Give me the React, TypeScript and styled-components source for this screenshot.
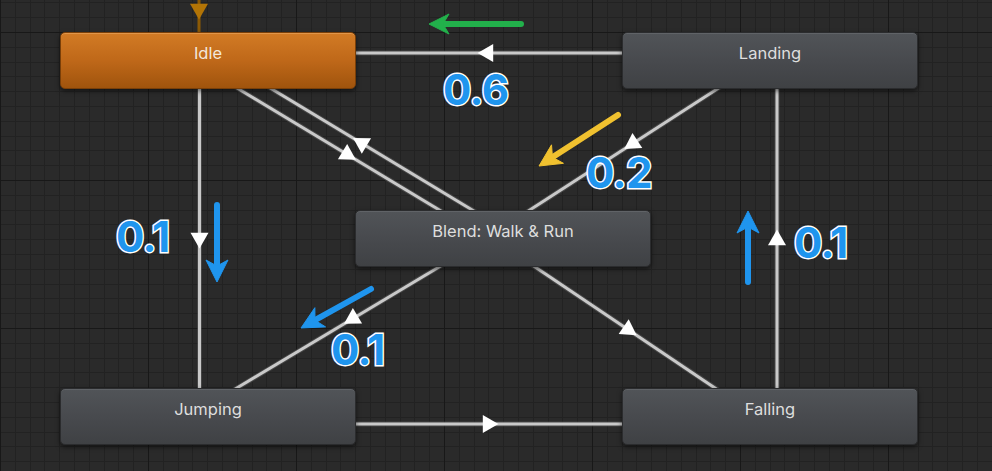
import React from 'react';
import styled, { createGlobalStyle } from 'styled-components';

const Global = createGlobalStyle`
  html, body { margin: 0; padding: 0; background: #2a2a2a; }
  body { width: 992px; height: 471px; overflow: hidden; }
`;

const Canvas = styled.div`
  position: relative;
  width: 992px;
  height: 471px;
  overflow: hidden;
  background-color: #2a2a2a;
  background-image:
    repeating-linear-gradient(to right, #181818 0 1px, transparent 1px 148px),
    repeating-linear-gradient(to bottom, #181818 0 1px, transparent 1px 148px),
    repeating-linear-gradient(to right, #222222 0 1px, transparent 1px 14.8px),
    repeating-linear-gradient(to bottom, #222222 0 1px, transparent 1px 14.8px);
  background-size: 100% 100%, 100% 1480px, 100% 100%, 100% 1480px;
  background-position: 0 0, 0 -116px, 0 0, 0 -116px;
  background-repeat: no-repeat;
  font-family: Inter, "Noto Sans", sans-serif;
`;

const Wires = styled.svg`
  position: absolute;
  left: 0;
  top: 0;
  width: 992px;
  height: 471px;
  overflow: visible;
`;

const StateNode = styled.div<{ $x: number; $y: number; $entry?: boolean }>`
  position: absolute;
  left: ${(p) => p.$x}px;
  top: ${(p) => p.$y}px;
  width: 296px;
  height: 57px;
  box-sizing: border-box;
  padding-top: 10px;
  border-radius: 5px;
  border: 1px solid ${(p) => (p.$entry ? '#7a3f08' : '#2b2c2e')};
  background: ${(p) =>
    p.$entry
      ? 'linear-gradient(to bottom, #d27b25 0%, #bf6819 50%, #a0540d 100%)'
      : 'linear-gradient(to bottom, #515458 0%, #47494d 55%, #3f4144 100%)'};
  box-shadow: inset 0 1px 0 ${(p) => (p.$entry ? 'rgba(255,200,140,0.35)' : 'rgba(255,255,255,0.09)')},
    0 2px 5px rgba(0, 0, 0, 0.55);
  color: ${(p) => (p.$entry ? '#f3e7da' : '#dedede')};
  font-size: 16.5px;
  line-height: 20px;
  text-align: center;
`;

const Weight = styled.span<{ $x: number; $y: number }>`
  position: absolute;
  left: ${(p) => p.$x}px;
  top: ${(p) => p.$y}px;
  font-family: Inter, "Noto Sans", sans-serif;
  font-weight: 700;
  font-size: 42px;
  line-height: 1;
  letter-spacing: -0.6px;
  color: #1f95ee;
  -webkit-text-stroke: 3px #ffffff;
  paint-order: stroke fill;
`;

type Pt = [number, number];

const tri = (cx: number, cy: number, deg: number, side = 18) => {
  const r = side / Math.sqrt(3);
  return [0, 120, 240]
    .map((k) => {
      const a = ((deg + k) * Math.PI) / 180;
      return `${(cx + r * Math.cos(a)).toFixed(2)},${(cy + r * Math.sin(a)).toFixed(2)}`;
    })
    .join(' ');
};

const extend = (a: Pt, b: Pt, e: number): [Pt, Pt] => {
  const dx = b[0] - a[0];
  const dy = b[1] - a[1];
  const l = Math.hypot(dx, dy);
  const ux = dx / l;
  const uy = dy / l;
  return [
    [a[0] - ux * e, a[1] - uy * e],
    [b[0] + ux * e, b[1] + uy * e],
  ];
};

const Wire: React.FC<{ a: Pt; b: Pt; ext?: number }> = ({ a, b, ext = 0 }) => {
  const [p, q] = extend(a, b, ext);
  return (
    <g>
      <line x1={p[0]} y1={p[1]} x2={q[0]} y2={q[1]} stroke="#5c5c5c" strokeWidth={5} strokeOpacity={0.55} />
      <line x1={p[0]} y1={p[1]} x2={q[0]} y2={q[1]} stroke="#c9c9c9" strokeWidth={3} />
    </g>
  );
};

const Head: React.FC<{ c: Pt; deg: number; color?: string }> = ({ c, deg, color = '#ffffff' }) => (
  <polygon points={tri(c[0], c[1], deg)} fill={color} />
);

const FlowArrow: React.FC<{ from: Pt; to: Pt; color: string; len?: number; half?: number }> = ({
  from,
  to,
  color,
  len = 22,
  half = 11,
}) => {
  const dx = to[0] - from[0];
  const dy = to[1] - from[1];
  const l = Math.hypot(dx, dy);
  const ux = dx / l;
  const uy = dy / l;
  const nx = -uy;
  const ny = ux;
  const shaftEnd: Pt = [to[0] - ux * (len - 6), to[1] - uy * (len - 6)];
  const back: Pt = [to[0] - ux * len, to[1] - uy * len];
  const notch: Pt = [to[0] - ux * (len - 6), to[1] - uy * (len - 6)];
  const d = `M ${to[0]} ${to[1]} L ${back[0] + nx * half} ${back[1] + ny * half} L ${notch[0]} ${notch[1]} L ${
    back[0] - nx * half
  } ${back[1] - ny * half} Z`;
  return (
    <g>
      <line
        x1={from[0]}
        y1={from[1]}
        x2={shaftEnd[0]}
        y2={shaftEnd[1]}
        stroke={color}
        strokeWidth={6}
        strokeLinecap="round"
      />
      <path d={d} fill={color} strokeLinejoin="round" stroke={color} strokeWidth={1} />
    </g>
  );
};

const states = [
  { name: 'Idle', x: 60, y: 32, entry: true },
  { name: 'Landing', x: 622, y: 32 },
  { name: 'Blend: Walk & Run', x: 355, y: 210 },
  { name: 'Jumping', x: 60, y: 388 },
  { name: 'Falling', x: 622, y: 388 },
];

const weights = [
  { v: '0.6', x: 443, y: 69 },
  { v: '0.2', x: 586, y: 152 },
  { v: '0.1', x: 116, y: 216 },
  { v: '0.1', x: 331, y: 329 },
  { v: '0.1', x: 794, y: 222 },
];

export default function App() {
  return (
    <>
      <Global />
      <Canvas>
        <Wires viewBox="0 0 992 471">
          {/* entry transition */}
          <line x1={199} y1={-5} x2={199} y2={34} stroke="#8d5a05" strokeWidth={3} />
          <Head c={[199, 9]} deg={90} color="#b27406" />

          {/* Idle <- Landing */}
          <Wire a={[340, 53]} b={[640, 53]} />
          <Head c={[488, 53]} deg={180} />

          {/* Jumping -> Falling */}
          <Wire a={[340, 424]} b={[640, 424]} />
          <Head c={[488, 424]} deg={0} />

          {/* Idle -> Jumping */}
          <Wire a={[199.5, 80]} b={[199.5, 400]} />
          <Head c={[199.5, 238]} deg={90} />

          {/* Falling -> Landing */}
          <Wire a={[777, 80]} b={[777, 400]} />
          <Head c={[777, 240]} deg={-90} />

          {/* Idle <-> Blend */}
          <Wire a={[212.4, 53.2]} b={[507.4, 231.2]} />
          <Wire a={[203.6, 67.8]} b={[498.6, 245.8]} />
          <Head c={[362, 143.4]} deg={211} />
          <Head c={[347, 154.3]} deg={31} />

          {/* Landing -> Blend */}
          <Wire a={[717, 89]} b={[530, 210]} ext={20} />
          <Head c={[633, 143.3]} deg={147.1} />

          {/* Blend -> Falling */}
          <Wire a={[535, 267]} b={[715, 388]} ext={20} />
          <Head c={[628, 329.5]} deg={33.9} />

          {/* Blend -> Jumping */}
          <Wire a={[439, 267]} b={[237, 388]} ext={20} />
          <Head c={[353, 318.5]} deg={149.1} />

          {/* annotation arrows */}
          <FlowArrow from={[521, 24]} to={[429, 24]} color="#22b04b" len={20} half={10} />
          <FlowArrow from={[618, 115]} to={[539, 166]} color="#f0c12f" />
          <FlowArrow from={[217, 205]} to={[217, 282]} color="#1f95ee" />
          <FlowArrow from={[748, 282]} to={[748, 211]} color="#1f95ee" />
          <FlowArrow from={[371, 289]} to={[301, 328]} color="#1f95ee" />
        </Wires>

        {states.map((s) => (
          <StateNode key={s.name} $x={s.x} $y={s.y} $entry={s.entry}>
            {s.name}
          </StateNode>
        ))}

        {weights.map((w, i) => (
          <Weight key={i} $x={w.x} $y={w.y}>
            {w.v}
          </Weight>
        ))}
      </Canvas>
    </>
  );
}
